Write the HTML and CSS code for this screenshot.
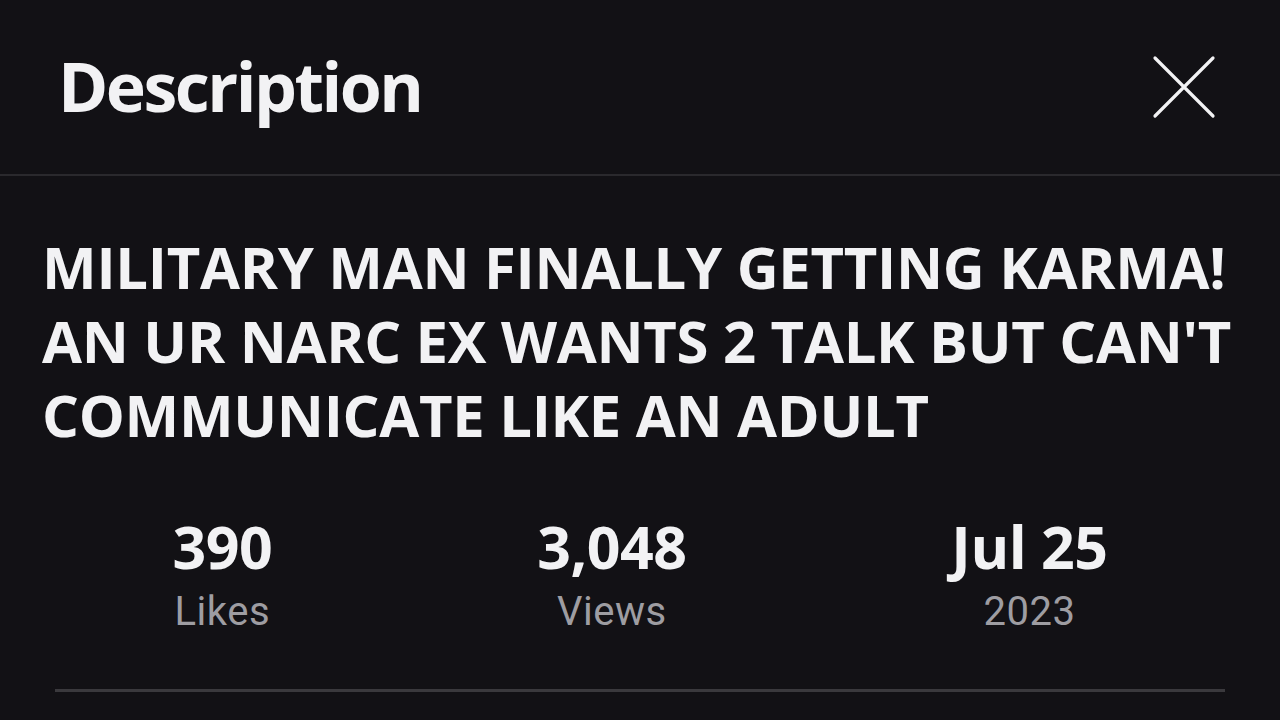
FILE: index.html
```html
<!DOCTYPE html>
<html lang="en">
<head>
    <meta charset="UTF-8">
    <meta name="viewport" content="width=device-width, initial-scale=1.0">
    <title>Description</title>
    <link rel="stylesheet" href="styles.css">
</head>
<body>
    <header class="sheet-header">
        <h1>Description</h1>
        <button class="close-btn" aria-label="Close">
            <svg width="64" height="64" viewBox="0 0 64 64">
                <path d="M3 3 L61 61 M61 3 L3 61" stroke="#f2f2f4" stroke-width="3.2" stroke-linecap="round" fill="none"/>
            </svg>
        </button>
    </header>

    <main class="sheet-body">
        <h2 class="video-title">MILITARY MAN FINALLY GETTING KARMA! AN UR NARC EX WANTS 2 TALK BUT CAN'T COMMUNICATE LIKE AN ADULT</h2>

        <div class="stats">
            <div class="stat">
                <div class="stat-value">390</div>
                <div class="stat-label">Likes</div>
            </div>
            <div class="stat">
                <div class="stat-value">3,048</div>
                <div class="stat-label">Views</div>
            </div>
            <div class="stat">
                <div class="stat-value">Jul 25</div>
                <div class="stat-label">2023</div>
            </div>
        </div>

        <hr class="divider">
    </main>
</body>
</html>
```

FILE: styles.css
```css
body {
    margin: 0;
    padding: 0;
    background-color: #121115;
    color: #f2f2f4;
    font-family: "Open Sans", "Noto Sans", sans-serif;
    height: 720px;
    overflow: hidden;
}
.sheet-header {
    display: flex;
    align-items: center;
    justify-content: space-between;
    height: 174px;
    padding: 0 64px 0 58px;
    border-bottom: 2px solid #2a292d;
}
.sheet-header h1 {
    margin: 0;
    font-size: 68px;
    font-weight: 700;
    letter-spacing: -2.5px;
    line-height: 1;
    padding-bottom: 2px;
}
.close-btn {
    background: none;
    border: none;
    padding: 0;
    width: 64px;
    height: 64px;
    cursor: pointer;
}
.close-btn svg {
    display: block;
}
.sheet-body {
    padding: 54px 42px 0 42px;
}
.video-title {
    margin: 0;
    font-size: 58px;
    font-weight: 700;
    line-height: 74px;
    letter-spacing: -0.3px;
}
.stats {
    display: flex;
    justify-content: space-around;
    margin: 60px -2px 0 -2px;
}
.stat {
    text-align: center;
}
.stat-value {
    font-size: 59px;
    font-weight: 700;
    line-height: 68px;
    letter-spacing: -0.5px;
}
.stat-label {
    margin-top: 9px;
    font-family: Roboto, "Liberation Sans", sans-serif;
    font-size: 40px;
    line-height: 46px;
    letter-spacing: 0.5px;
    color: #9e9da2;
}
.divider {
    margin: 54px 13px 0 13px;
    border: none;
    border-top: 3px solid #3a393d;
}
```
